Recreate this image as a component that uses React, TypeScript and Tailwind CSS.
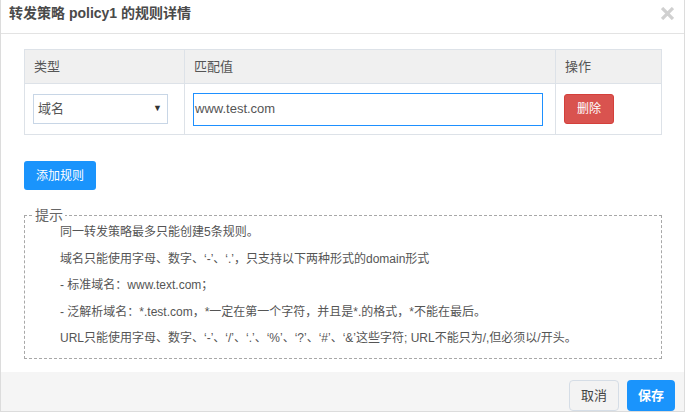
import * as React from 'react';

const font = { fontFamily: '"Liberation Sans", "Noto Sans CJK SC", sans-serif' };

const hints = [
  '同一转发策略最多只能创建5条规则。',
  '域名只能使用字母、数字、‘-’、‘.’，只支持以下两种形式的domain形式',
  '- 标准域名：www.text.com；',
  '- 泛解析域名：*.test.com，*一定在第一个字符，并且是*.的格式，*不能在最后。',
  'URL只能使用字母、数字、‘-’、‘/’、‘.’、‘%’、‘?’、‘#’、‘&’这些字符; URL不能只为/,但必须以/开头。',
];

export default function App() {
  return (
    <div style={font} className="w-[685px] h-[412px] bg-white border-x border-b border-[#dcdcdc] flex flex-col overflow-hidden text-[#555]">
      <div className="h-[34px] shrink-0 border-b border-[#e3e3e3] flex items-start justify-between pl-[8px] pr-[10px] pt-[4px]">
        <h1 className="text-[14px] font-bold text-[#4a4a4a] leading-[18px]">转发策略 policy1 的规则详情</h1>
        <svg className="w-[13px] h-[13px] mt-[3px]" viewBox="0 0 12 12">
          <path d="M2 2 L10 10 M10 2 L2 10" stroke="#d0d0d0" strokeWidth="3" strokeLinecap="square" />
        </svg>
      </div>

      <div className="flex-1 px-[23px] pt-[15px]">
        <table className="w-[638px] border-collapse text-[13px]">
          <thead>
            <tr className="bg-[#f0f0f0] h-[34px]">
              <th className="w-[160px] border border-[#dde2e8] text-left font-normal pl-[9px] text-[#555]">类型</th>
              <th className="w-[371px] border border-[#dde2e8] text-left font-normal pl-[9px] text-[#555]">匹配值</th>
              <th className="border border-[#dde2e8] text-left font-normal pl-[9px] text-[#555]">操作</th>
            </tr>
          </thead>
          <tbody>
            <tr className="h-[51px]">
              <td className="border border-[#dde2e8] pl-[8px]">
                <div className="w-[135px] h-[30px] border border-[#c8d6e6] flex items-center justify-between pl-[4px] pr-[5px] text-[13px] text-[#555]">
                  <span>域名</span>
                  <span className="text-[9px] text-[#333]">▼</span>
                </div>
              </td>
              <td className="border border-[#dde2e8] pl-[8px]">
                <div className="w-[350px] h-[33px] border border-[#1e90ff] flex items-center pl-[1px] text-[13px] text-[#555]">
                  www.test.com
                </div>
              </td>
              <td className="border border-[#dde2e8] pl-[8px]">
                <button className="w-[50px] h-[30px] rounded-[3px] bg-[#d9534f] border border-[#d43f3a] text-white text-[12px]">删除</button>
              </td>
            </tr>
          </tbody>
        </table>

        <button className="mt-[26px] w-[72px] h-[29px] rounded-[3px] bg-[#1a94fc] text-white text-[12px]">添加规则</button>

        <fieldset className="mt-[17px] w-[638px] border border-dashed border-[#a8a8a8] pb-[6px]">
          <legend className="ml-[8px] px-[2px] text-[14px] leading-[16px] text-[#666]">提示</legend>
          <div className="-mt-[4px] pl-[35px] flex flex-col text-[12px] text-[#555]">
            {hints.map((h, i) => (
              <p key={i} className="leading-[26.5px]">{h}</p>
            ))}
          </div>
        </fieldset>
      </div>

      <div className="h-[39px] shrink-0 bg-[#f5f5f5] flex items-start justify-end gap-[8px] pr-[9px] pt-[8px]">
        <button className="w-[50px] h-[31px] rounded-[4px] border border-[#d5dde6] bg-[#f3f3f3] text-[13px] text-[#444]">取消</button>
        <button className="w-[48px] h-[31px] rounded-[4px] bg-[#1a94fc] text-white text-[13px] font-bold">保存</button>
      </div>
    </div>
  );
}
